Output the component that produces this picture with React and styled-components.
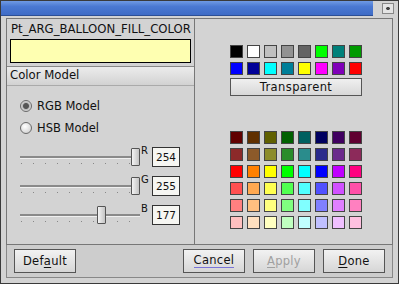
import styled, { createGlobalStyle } from "styled-components";

const Global = createGlobalStyle`
  html, body { margin: 0; padding: 0; background: #d6d6d6; }
  body { font-family: "DejaVu Sans", "Liberation Sans", sans-serif; font-size: 11.5px; color: #111; }
`;

const Window = styled.div`
  box-sizing: border-box;
  width: 399px;
  height: 284px;
  border: 1px solid #3a3a3a;
  background: #d3d3d3;
  display: flex;
  flex-direction: column;
  padding: 0 5px 5px 5px;
`;

const TitleBar = styled.div`
  height: 15px;
  margin: 0 -5px;
  display: flex;
  align-items: stretch;
`;

const TitleFill = styled.div`
  flex: 1;
  background: linear-gradient(#6f9ae4, #4a78d2 40%, #3f6cc6);
  border-bottom: 1px solid #2c4f96;
  margin-right: 4px;
`;

const CloseBox = styled.div`
  width: 21px;
  display: flex;
  align-items: center;
  justify-content: center;
  &::after {
    content: "";
    width: 12px;
    height: 11px;
    box-sizing: border-box;
    border: 1px solid #888;
    background: radial-gradient(circle, #444 0 1.5px, #e4e4e4 2px);
  }
`;

const Main = styled.div`
  display: flex;
  margin-top: 2px;
  height: 225px;
  border: 1px solid #777;
`;

const LeftPanel = styled.div`
  width: 187px;
  border-right: 1px solid #777;
  display: flex;
  flex-direction: column;
`;

const ResName = styled.div`
  padding: 3px 0 0 4px;
  height: 17px;
  white-space: nowrap;
  font-size: 11.7px;
`;

const Swatch = styled.div`
  margin: 0 3px 0 3px;
  height: 22px;
  border: 1px solid #000;
  background: ${(p) => p.$color};
`;

const SectionHead = styled.div`
  margin-top: 3px;
  height: 17px;
  border-top: 1px solid #888;
  border-bottom: 1px solid #aaa;
  background: linear-gradient(#ececec, #d2d2d2);
  padding: 1px 0 0 3px;
  font-size: 11.7px;
`;

const RadioGroup = styled.div`
  display: flex;
  flex-direction: column;
  gap: 8px;
  padding: 13px 0 0 13px;
`;

const RadioRow = styled.label`
  display: flex;
  align-items: center;
  gap: 5px;
  height: 14px;
`;

const RadioDot = styled.span`
  width: 12px;
  height: 12px;
  box-sizing: border-box;
  border-radius: 50%;
  border: 1px solid #6a6a6a;
  background: ${(p) =>
    p.$on
      ? "radial-gradient(circle, #555 0 2.5px, #bbb 3.5px, #eee 6px)"
      : "radial-gradient(circle at 40% 35%, #fff, #c8c8c8)"};
`;

const Sliders = styled.div`
  display: flex;
  flex-direction: column;
  gap: 9px;
  padding: 12px 0 0 7px;
`;

const SliderRow = styled.div`
  display: flex;
  align-items: center;
  height: 20px;
`;

const Track = styled.div`
  position: relative;
  width: 126px;
  height: 20px;
  &::before {
    content: "";
    position: absolute;
    left: 6px;
    right: 0;
    top: 9px;
    height: 2px;
    background: #8a8a8a;
    border-bottom: 1px solid #f0f0f0;
  }
  &::after {
    content: "";
    position: absolute;
    left: 7px;
    right: 2px;
    top: 16px;
    height: 1px;
    background: repeating-linear-gradient(90deg, #888 0 1px, transparent 1px 12px);
  }
`;

const Thumb = styled.div`
  position: absolute;
  top: 1px;
  width: 7px;
  height: 16px;
  border: 1px solid #555;
  border-radius: 1px;
  background: linear-gradient(90deg, #f4f4f4, #c4c4c4);
  z-index: 1;
`;

const ChanLabel = styled.span`
  width: 11px;
  align-self: flex-start;
  font-size: 10px;
  padding-left: 1px;
  margin-top: -2px;
`;

const ValueBox = styled.div`
  width: 26px;
  height: 18px;
  border: 1px solid #333;
  background: #f6f6f2;
  font-size: 10.5px;
  display: flex;
  align-items: center;
  justify-content: center;
`;

const RightPanel = styled.div`
  flex: 1;
  display: flex;
  flex-direction: column;
  padding: 26px 0 0 35px;
`;

const Grid = styled.div`
  display: grid;
  grid-template-columns: repeat(8, 13px);
  grid-auto-rows: 13px;
  gap: 4px;
`;

const Cell = styled.div`
  box-sizing: border-box;
  border: 1px solid #444;
  background: ${(p) => p.$c};
`;

const TransparentBtn = styled.div`
  box-sizing: border-box;
  width: 132px;
  height: 18px;
  margin-top: 3px;
  border: 1px solid #555;
  background: linear-gradient(#f0f0f0, #d8d8d8);
  display: flex;
  align-items: center;
  justify-content: center;
  letter-spacing: 0.4px;
`;

const Spacer = styled.div`
  height: ${(p) => p.$h}px;
`;

const Footer = styled.div`
  flex: 1;
  display: flex;
  align-items: center;
  padding: 0 7px 0 7px;
  gap: 8px;
  background: #cdcdcd;
  border: 1px solid #888;
  border-top: none;
`;

const Btn = styled.div`
  box-sizing: border-box;
  width: 62px;
  height: 24px;
  border: 1px solid #555;
  background: linear-gradient(#f2f2f2, #d6d6d6);
  display: flex;
  align-items: center;
  justify-content: center;
  letter-spacing: 0.3px;
  color: ${(p) => (p.$disabled ? "#a0a0a0" : "#111")};
  margin-left: ${(p) => (p.$push ? "auto" : "0")};
  & u { text-underline-offset: 2px; }
`;

const Focused = styled.span`
  border-bottom: 1px solid #7a74d8;
  line-height: 13px;
`;

const topColors = [
  "#000000", "#ffffff", "#c0c0c0", "#929292", "#636363", "#00ff00", "#00807a", "#009a00",
  "#0000ff", "#000098", "#00ffff", "#007f99", "#ffff00", "#ff00ff", "#7f00b8", "#ff0000",
];

const bottomColors = [
  "#600000", "#603000", "#606000", "#006000", "#006060", "#000060", "#400060", "#600030",
  "#8c2a2a", "#8c5a2a", "#8c8c2a", "#2a8c2a", "#2a8c8c", "#2a2a8c", "#6a2a8c", "#8c2a5a",
  "#ff0000", "#ff8000", "#ffff00", "#00ff00", "#00ffff", "#0000ff", "#c000ff", "#ff0080",
  "#ff5050", "#ffa850", "#ffff50", "#50ff50", "#50ffff", "#5050ff", "#d050ff", "#ff50a8",
  "#ff8080", "#ffc080", "#ffff80", "#80ff80", "#80ffff", "#8080ff", "#e080ff", "#ff80c0",
  "#ffc0c0", "#ffe0c0", "#ffffc0", "#c0ffc0", "#c0ffff", "#c0c0ff", "#f0c0ff", "#ffc0e0",
];

const channels = [
  { name: "R", value: 254 },
  { name: "G", value: 255 },
  { name: "B", value: 177 },
];

export default function App() {
  return (
    <>
      <Global />
      <Window>
        <TitleBar>
          <TitleFill />
          <CloseBox />
        </TitleBar>
        <Main>
          <LeftPanel>
            <ResName>Pt_ARG_BALLOON_FILL_COLOR</ResName>
            <Swatch $color="#feffb1" />
            <SectionHead>Color Model</SectionHead>
            <RadioGroup>
              <RadioRow><RadioDot $on />RGB Model</RadioRow>
              <RadioRow><RadioDot />HSB Model</RadioRow>
            </RadioGroup>
            <Sliders>
              {channels.map((c) => (
                <SliderRow key={c.name}>
                  <Track>
                    <Thumb style={{ left: `${6 + (c.value / 255) * 111}px` }} />
                  </Track>
                  <ChanLabel>{c.name}</ChanLabel>
                  <ValueBox>{c.value}</ValueBox>
                </SliderRow>
              ))}
            </Sliders>
          </LeftPanel>
          <RightPanel>
            <Grid>
              {topColors.map((c, i) => <Cell key={i} $c={c} />)}
            </Grid>
            <TransparentBtn>Transparent</TransparentBtn>
            <Spacer $h={35} />
            <Grid>
              {bottomColors.map((c, i) => <Cell key={i} $c={c} />)}
            </Grid>
          </RightPanel>
        </Main>
        <Footer>
          <Btn>Def<u>a</u>ult</Btn>
          <Btn $push><Focused>Cancel</Focused></Btn>
          <Btn $disabled><u>A</u>pply</Btn>
          <Btn><u>D</u>one</Btn>
        </Footer>
      </Window>
    </>
  );
}
